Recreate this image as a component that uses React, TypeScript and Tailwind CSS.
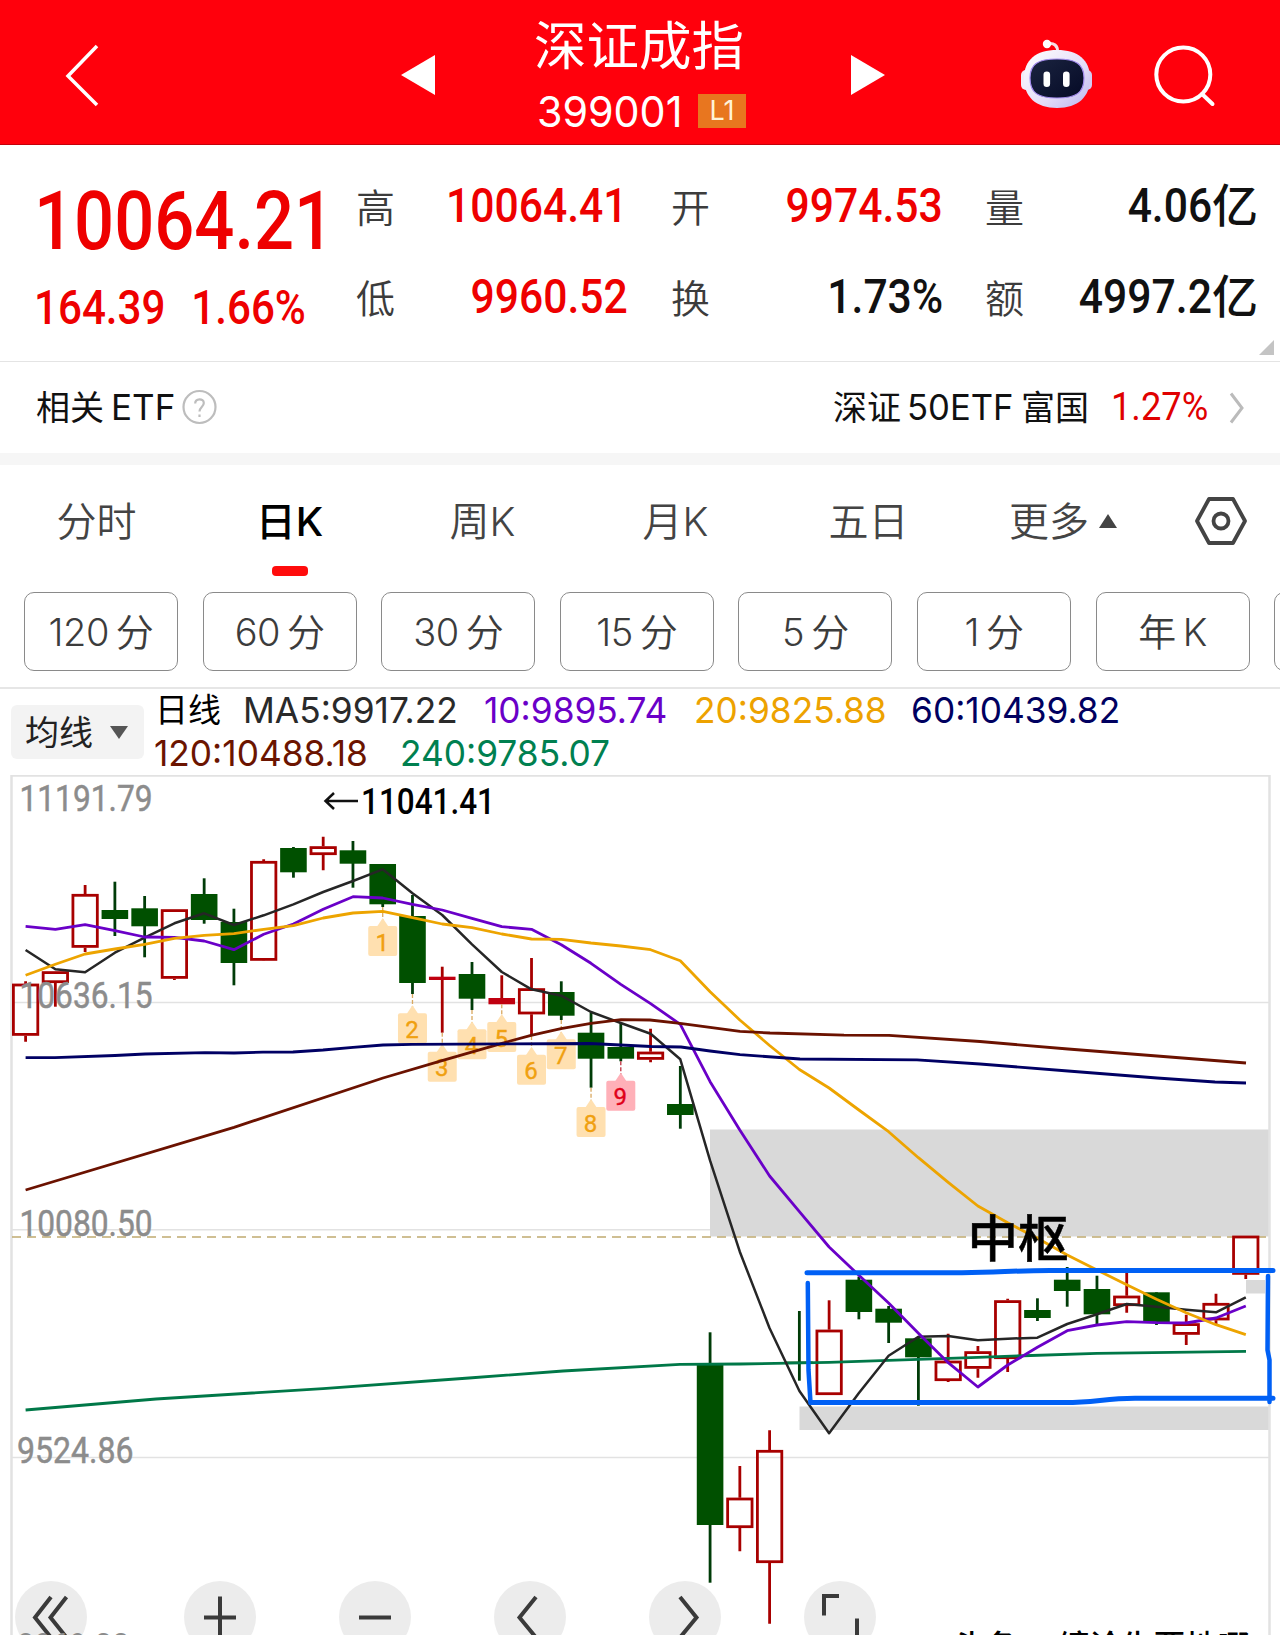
import React, { useState } from "react";
import clsx from "clsx";

type Candle = {
  up: boolean;
  top: number;
  bottom: number;
  high: number;
  low: number;
  solid?: boolean;
  thin?: boolean;
};

const FIRST_X = 25.6;
const STEP = 29.76;
const xAt = (i: number) => FIRST_X + i * STEP;

const c = (up: boolean, top: number, bottom: number, high: number, low: number): Candle => ({
  up,
  top,
  bottom,
  high,
  low,
});

const candles: Candle[] = [
  c(true, 983.7, 1035.7, 981.3, 1041.7),
  c(true, 971.3, 983, 971.3, 1006.7),
  c(true, 894, 947.7, 885, 952),
  c(false, 910, 919, 881.7, 936),
  c(false, 908.3, 926.3, 896, 957.3),
  c(true, 909.3, 978.7, 909.3, 980),
  c(false, 894, 920, 878.3, 923.7),
  c(false, 922, 963, 908.7, 985.3),
  c(true, 861, 960.7, 859.3, 961),
  c(false, 848, 872.3, 847, 877.7),
  c(true, 846.3, 855, 836.7, 870.3),
  c(false, 850.3, 863.7, 841, 887.7),
  c(false, 864, 904.3, 864, 907),
  c(false, 916, 983, 895, 994),
  { ...c(true, 976.7, 980, 966.7, 1032.7), solid: true },
  c(false, 974, 998.7, 962, 1010),
  { ...c(true, 998, 1004.3, 975.3, 1004), solid: true },
  c(true, 988.3, 1014.3, 958, 1036),
  c(false, 992, 1015.7, 981.3, 1020),
  c(false, 1032.7, 1058.7, 1012.3, 1087.7),
  c(false, 1047, 1058.7, 1023.3, 1061.3),
  c(true, 1051.7, 1059.7, 1028.7, 1062.3),
  c(false, 1104, 1115, 1066, 1128.7),
  c(false, 1364, 1525, 1332.3, 1582.7),
  c(true, 1497.7, 1528, 1466, 1551.3),
  c(true, 1450, 1563, 1430.3, 1623.7),
  { ...c(false, 1361.5, 1365, 1311, 1380.7), thin: true },
  c(true, 1329.7, 1395, 1300.3, 1395),
  c(false, 1279.7, 1312, 1276.7, 1319.3),
  c(false, 1308.7, 1322.7, 1306, 1343),
  c(false, 1338.3, 1357.3, 1337, 1405.7),
  c(true, 1360.7, 1381, 1333.7, 1382),
  c(true, 1351.3, 1368.7, 1346, 1377.7),
  c(true, 1300.3, 1359, 1298.7, 1372),
  c(false, 1310, 1318, 1298.3, 1321),
  c(false, 1279.7, 1291, 1267, 1306.7),
  c(false, 1289, 1314.3, 1275.7, 1325),
  c(true, 1295.7, 1306, 1272.7, 1312.7),
  c(false, 1292.3, 1322.3, 1292.3, 1325),
  c(true, 1323.3, 1334.7, 1314.7, 1345),
  c(true, 1303, 1320.3, 1293.7, 1324),
  c(true, 1235.7, 1274.7, 1235.7, 1279),
];

const series = (values: number[]) =>
  values.map((y, i) => `${xAt(i).toFixed(1)},${y}`).join(" ");

const ma5 = [
  950, 969.3, 972.3, 952.7, 937.7, 923.3, 913.3, 925, 915.3, 904.3, 892, 881, 869.3, 893.3, 915,
  944.3, 972, 989.3, 995.7, 1012, 1023, 1033.7, 1059.3, 1160.7, 1251.7, 1328.3, 1391, 1433.3, 1393,
  1355.7, 1336.7, 1336, 1340.3, 1338.7, 1337.7, 1324, 1314.3, 1304, 1306.7, 1309.7, 1312.3, 1297.3,
];

const ma10 = [
  926.3, 929.3, 924.7, 930.7, 937, 937.3, 941, 949.7, 934.3, 924, 909.3, 896.7, 898, 904.3, 910,
  918.3, 926.7, 929.3, 944.7, 963.3, 984.3, 1003.7, 1024.3, 1081.7, 1130, 1176, 1211.7, 1247,
  1275.3, 1303, 1333.3, 1362.7, 1387, 1365, 1347.3, 1330.7, 1325, 1321.7, 1322.7, 1323, 1318, 1306,
];

const ma20 = [
  975.3, 964.3, 954, 949, 944.3, 938.3, 935.3, 933.7, 929.3, 925.7, 918, 913, 911.3, 917.7, 924,
  927.7, 934, 939, 939.3, 943, 946, 949.7, 960.7, 991.7, 1020, 1045.5, 1069.5, 1088, 1110, 1131.7,
  1157.7, 1182.3, 1206, 1222.7, 1238.3, 1255, 1270, 1284.7, 1299.3, 1312.7, 1324.7, 1334.7,
];

const ma60 =
  "25.6,1057.7 55,1057.7 115,1055.5 145,1054 205,1052.7 234,1053 263,1052.2 293,1052 323,1050 353,1047.3 383,1045 412,1044.3 590,1043.5 651,1046.5 681,1047 710,1051 740,1054.7 800,1059 917,1059.8 980,1064 1068,1071 1157,1078 1215,1082 1246,1083";
const ma120 =
  "25.6,1190 234,1127.3 383,1078 442,1060.7 502,1043.3 531,1035.3 561,1028.7 591,1023.3 621,1019.7 650,1020 680,1023.3 740,1031.3 770,1033 844,1035.2 889,1035.4 980,1041.5 1068,1049 1157,1056 1246,1063";
const ma240 =
  "25.6,1410 156,1399 323,1388.6 469,1378 563,1371 680,1364.3 740,1364 829,1362.3 978,1357.3 1097,1353.3 1246,1351.3";

const marks = [
  { i: 12, from: 907, top: 926 },
  { i: 13, from: 994, top: 1013.3 },
  { i: 14, from: 1032.7, top: 1051.7 },
  { i: 15, from: 1010, top: 1029.3 },
  { i: 16, from: 1004.3, top: 1022 },
  { i: 17, from: 1036, top: 1054.7 },
  { i: 18, from: 1020, top: 1039.3 },
  { i: 19, from: 1087.7, top: 1107 },
  { i: 20, from: 1061.3, top: 1080.7 },
];

const axis = [
  { label: "11191.79", x: 19.5, y: 811, w: 133 },
  { label: "10636.15", x: 19.5, y: 1007.5, w: 133 },
  { label: "10080.50", x: 19.5, y: 1235.5, w: 133 },
  { label: "9524.86", x: 17, y: 1463, w: 116.5 },
  { label: "8969.22", x: 17, y: 1660, w: 116.5 },
];

const tabs = ["分时", "日K", "周K", "月K", "五日"];
const periods = [
  ["120", "分"],
  ["60", "分"],
  ["30", "分"],
  ["15", "分"],
  ["5", "分"],
  ["1", "分"],
  ["年", "K"],
];

const Robot: React.FC = () => (
  <svg width="76" height="72" viewBox="1018 38 76 72">
    <defs>
      <linearGradient id="shell" x1="0" y1="0" x2="1" y2="1">
        <stop offset="0" stopColor="#ffffff" />
        <stop offset="0.6" stopColor="#e4dcf8" />
        <stop offset="1" stopColor="#b9b4ee" />
      </linearGradient>
      <linearGradient id="face" x1="0" y1="0" x2="1" y2="1">
        <stop offset="0" stopColor="#1b2440" />
        <stop offset="1" stopColor="#050a26" />
      </linearGradient>
    </defs>
    <path d="M1047 44 C1054 42 1058 46 1057.5 52" fill="none" stroke="#f6dfe6" strokeWidth="3" />
    <circle cx="1047" cy="44" r="4.2" fill="#fff" />
    <rect x="1021" y="70" width="10" height="20" rx="5" fill="#f3ecf8" />
    <rect x="1082" y="70" width="10" height="20" rx="5" fill="#d4ccf2" />
    <path
      d="M1057 50 C1078 50 1090 60 1090 78 C1090 97 1078 108 1057 108 C1036 108 1024 97 1024 78 C1024 60 1036 50 1057 50Z"
      fill="url(#shell)"
    />
    <path
      d="M1057 59 C1076 59 1084 64 1084 78 C1084 93 1076 98 1057 98 C1038 98 1030 93 1030 78 C1030 64 1038 59 1057 59Z"
      fill="url(#face)"
      stroke="#a58cf0"
      strokeWidth="1.2"
    />
    <rect x="1043.5" y="71.5" width="6.6" height="15.5" rx="3.3" fill="#fff" />
    <rect x="1063" y="71.5" width="6.6" height="15.5" rx="3.3" fill="#fff" />
  </svg>
);

const Header: React.FC = () => (
  <header className="flex h-[145px] items-start border-b border-[#c4000a] bg-[#ff000c] text-white">
    <button className="mt-[44px] ml-[64px]" aria-label="back">
      <svg width="36" height="64" viewBox="0 0 36 64" fill="none" stroke="#fff" strokeWidth="3.500">
        <path d="M33 2 L4 32 L33 61" />
      </svg>
    </button>
    <button className="mt-[55px] ml-[301px]" aria-label="previous">
      <svg width="34" height="40" viewBox="0 0 34 40" fill="#fff">
        <path d="M34 0 V40 L0 20Z" />
      </svg>
    </button>
    <div className="ml-[99px] flex w-[213px] flex-col">
      <h1 className="mt-[16px] text-[52.500px] leading-[60px] whitespace-nowrap">深证成指</h1>
      <div className="mt-[9px] flex items-center">
        <span className="w-[164px] origin-left scale-x-[.96] pl-[3px] text-[43px] leading-[52px] whitespace-nowrap">
          399001
        </span>
        <span className="flex h-[34px] w-[48px] items-center justify-center bg-[#e8761f] text-[27px] text-[#fff3d8]">
          L1
        </span>
      </div>
    </div>
    <button className="mt-[55px] ml-[104px]" aria-label="next">
      <svg width="34" height="40" viewBox="0 0 34 40" fill="#fff">
        <path d="M0 0 V40 L34 20Z" />
      </svg>
    </button>
    <button className="mt-[38px] ml-[133px]" aria-label="assistant">
      <Robot />
    </button>
    <button className="mt-[42px] ml-[59px]" aria-label="search">
      <svg width="64" height="66" viewBox="1153 42 64 66" fill="none" stroke="#fff" strokeWidth="4">
        <circle cx="1183.3" cy="74.5" r="27" />
        <path d="M1202 94 L1212.500 104" strokeLinecap="round" />
      </svg>
    </button>
  </header>
);

interface StatProps {
  label: string;
  value: string;
  unit?: string;
  red?: boolean;
}

const Stat: React.FC<StatProps> = ({ label, value, unit, red }) => (
  <div className="flex h-[91px] items-center justify-between">
    <span className="pt-[5px] text-[39px] font-[350] text-[#3c3c3c]">{label}</span>
    <span
      className={clsx(
        "flex items-center font-[Roboto,'Noto_Sans_CJK_SC',sans-serif] text-[49px] leading-[60px] font-medium",
        red ? "text-[#ee0000]" : "text-[#111]"
      )}
    >
      <span className="origin-right scale-x-[.87]">{value}</span>
      {unit && <span className="w-[46px] text-[46px]">{unit}</span>}
    </span>
  </div>
);

const Quote: React.FC = () => (
  <section className="relative flex h-[217px] border-b border-[#e4e4e4] pt-[15px]">
    <div className="w-[356px] pl-[34px] font-[Roboto,sans-serif] font-medium text-[#ee0000]">
      <div className="mt-[15px] h-[92px] origin-left scale-x-[.86] text-[82px] leading-[92px] whitespace-nowrap">
        10064.21
      </div>
      <div className="mt-[11px] flex origin-left scale-x-[.86] gap-[30px] text-[49px] leading-[60px] whitespace-nowrap">
        <span>164.39</span>
        <span>1.66%</span>
      </div>
    </div>
    <div className="w-[272px]">
      <Stat label="高" value="10064.41" red />
      <Stat label="低" value="9960.52" red />
    </div>
    <div className="ml-[43px] w-[272px]">
      <Stat label="开" value="9974.53" red />
      <Stat label="换" value="1.73%" />
    </div>
    <div className="ml-[42px] w-[273px]">
      <Stat label="量" value="4.06" unit="亿" />
      <Stat label="额" value="4997.2" unit="亿" />
    </div>
    <svg className="absolute right-[6px] bottom-[6px]" width="15" height="15" fill="#c4c4c4">
      <path d="M15 0 V15 H0Z" />
    </svg>
  </section>
);

const EtfRow: React.FC = () => (
  <section className="flex h-[103px] items-center justify-between border-b-[12px] border-[#f6f6f6] pr-[35px] pl-[36px] text-[35px] text-[#111]">
    <div className="flex items-center">
      <span className="w-[75px] text-[34px]">相关</span>
      <span className="w-[71px] origin-left">ETF</span>
      <svg className="-mt-[2px]" width="35" height="36" viewBox="0 0 35 36" fill="none" stroke="#bdbdbd" strokeWidth="2.200">
        <circle cx="17.500" cy="18" r="16" />
        <path d="M13.200 14.500 C13.200 9 21.800 9 21.800 14 C21.800 18 17.500 18 17.500 22.500" />
        <path d="M17.500 25.500 V28" />
      </svg>
    </div>
    <div className="flex items-center">
      <span className="w-[74px] text-[34px]">深证</span>
      <span className="w-[114px] origin-left scale-x-[.99] whitespace-nowrap">50ETF</span>
      <span className="w-[89px] text-[34px]">富国</span>
      <span className="w-[119px] origin-left scale-x-[.93] pl-[1px] font-[Roboto,sans-serif] text-[39px] text-[#e00000]">
        1.27%
      </span>
      <svg width="16" height="32" viewBox="0 0 16 32" fill="none" stroke="#bbb" strokeWidth="3">
        <path d="M2 1.500 L13 16 L2 30.500" />
      </svg>
    </div>
  </section>
);

interface TabsProps {
  active: string;
  onChange: (tab: string) => void;
}

const Tabs: React.FC<TabsProps> = ({ active, onChange }) => (
  <nav className="flex h-[112px] items-start pt-[26px] text-[40px] leading-[62px] text-[#444]">
    {tabs.map((tab) => (
      <button
        key={tab}
        onClick={() => onChange(tab)}
        className={clsx(
          "flex w-[193px] flex-col items-center",
          tab === active ? "font-medium text-black" : "font-[350]"
        )}
      >
        <span>{tab}</span>
        {tab === active && <span className="mt-[13px] h-[10px] w-[36px] rounded-[4px] bg-[#ff0c0c]" />}
      </button>
    ))}
    <button className="ml-[44px] flex items-center font-[350]">
      更多
      <svg className="-mt-[3px] ml-[10px]" width="18" height="14" fill="#444">
        <path d="M9 0 L18 14 H0Z" />
      </svg>
    </button>
    <button className="mt-[5px] ml-[78px]" aria-label="settings">
      <svg width="52" height="50" viewBox="0 0 52 50" fill="none" stroke="#444" strokeWidth="3.800">
        <path d="M14 3 H38 L50 25 L38 47 H14 L2 25Z" strokeLinejoin="round" />
        <circle cx="26" cy="25" r="7.500" />
      </svg>
    </button>
  </nav>
);

const Periods: React.FC = () => (
  <div className="flex h-[112px] gap-[24.600px] overflow-hidden border-b-2 border-[#e6e6e6] pt-[15px] pl-[24px]">
    {periods.map(([a, b]) => (
      <button
        key={a}
        className="flex h-[79px] w-[154px] shrink-0 items-center justify-center gap-[7px] rounded-[10px] border border-[#8a8a8a] pt-[2px] text-[38px] font-[350] tracking-[-0.5px] text-[#3c3c3c]"
      >
        <span>{a}</span>
        <span>{b}</span>
      </button>
    ))}
    <button className="h-[79px] w-[154px] shrink-0 rounded-[10px] border border-[#8a8a8a]" aria-label="more" />
  </div>
);

const Legend: React.FC = () => (
  <div className="flex h-[86px] pl-[11px]">
    <button className="mt-[16px] flex h-[54px] w-[133px] items-center rounded-[6px] bg-[#f3f3f3] pl-[14px] text-[34px] text-[#222]">
      均线
      <svg className="ml-[17px]" width="18" height="13" fill="#555">
        <path d="M0 0 H18 L9 13Z" />
      </svg>
    </button>
    <div className="ml-[10px] text-[36px] leading-[43px] whitespace-nowrap">
      <div className="flex">
        <span className="w-[89px] pl-[1px] text-[33px] text-black">日线</span>
        <span className="w-[241px] origin-left scale-x-[.98] text-[#2a2a2a]">MA5:9917.22</span>
        <span className="w-[210px] origin-left scale-x-[.98] text-[#6a00c8]">10:9895.74</span>
        <span className="w-[217px] origin-left scale-x-[.98] text-[#eda200]">20:9825.88</span>
        <span className="origin-left scale-x-[.98] text-[#000060]">60:10439.82</span>
      </div>
      <div className="flex">
        <span className="w-[246px] origin-left scale-x-[.98] text-[#6b1400]">120:10488.18</span>
        <span className="origin-left scale-x-[.98] text-[#008050]">240:9785.07</span>
      </div>
    </div>
  </div>
);

const CandleShape: React.FC<{ candle: Candle; x: number }> = ({ candle, x }) => {
  const { up, top, bottom, high, low, solid, thin } = candle;
  const color = up ? "#a80000" : "#005000";
  if (up && !solid) {
    return (
      <g stroke={color} strokeWidth="2.800" fill="none">
        <path d={`M${x} ${high} V${top} M${x} ${bottom} V${low}`} />
        <rect x={x - 12.2} y={top + 1.3} width="24.400" height={bottom - top - 2.6} />
      </g>
    );
  }
  return (
    <g>
      <path d={`M${x} ${high} V${low}`} stroke={up ? color : "#003c08"} strokeWidth="2.800" />
      <rect
        x={x - 13.3}
        y={top}
        width="26.600"
        height={thin ? 2.5 : bottom - top}
        fill={up ? "#c00010" : color}
      />
    </g>
  );
};

const Chart: React.FC = () => (
  <svg
    className="block"
    width="1280"
    height="860"
    viewBox="0 775 1280 860"
    fontFamily="Roboto, 'Noto Sans CJK SC', sans-serif"
  >
    <rect x="710" y="1129.500" width="559" height="107" fill="#d9d9d9" />
    <rect x="799.500" y="1406.500" width="469.500" height="23.500" fill="#d9d9d9" />
    <rect x="1246" y="1280" width="19" height="13.500" fill="#d9d9d9" />
    <g stroke="#e2e2e2" strokeWidth="1.500">
      <path d="M12 1002.500 H1269 M12 1229.700 H710 M12 1457.500 H1269" />
      <path d="M11.500 1640 V775.500 H1269.500 V1640" fill="none" strokeWidth="2.500" />
    </g>
    <path d="M12 1237 H1269" stroke="#c0ab70" strokeWidth="1.600" strokeDasharray="9 6" />

    {candles.map((candle, i) => (
      <CandleShape key={i} candle={candle} x={xAt(i)} />
    ))}

    {marks.map(({ i, from, top }, n) => {
      const x = xAt(i);
      const last = n === marks.length - 1;
      const fill = last ? "#ffb0b8" : "#ffe0b0";
      return (
        <g key={i}>
          <path
            d={`M${x} ${from} V${top - 6}`}
            stroke={last ? "#c03040" : "#d9a860"}
            strokeWidth="1.300"
            strokeDasharray="4 2"
          />
          <path d={`M${x} ${top - 8} L${x + 6} ${top + 1} H${x - 6}Z`} fill={fill} />
          <rect x={x - 14.5} y={top} width="29" height="30" rx="2" fill={fill} />
          <text
            x={x - 0.5}
            y={top + 24.5}
            textAnchor="middle"
            fontSize="24"
            fill={last ? "#e00018" : "#f0a010"}
            stroke={last ? "#e00018" : "#f0a010"}
            strokeWidth="0.400"
          >
            {n + 1}
          </text>
        </g>
      );
    })}

    <g fill="none" strokeWidth="2.800" strokeLinejoin="round">
      <polyline points={ma240} stroke="#007848" />
      <polyline points={series(ma5)} stroke="#262626" strokeWidth="2.500" />
      <polyline points={series(ma10)} stroke="#6a00c8" />
      <polyline points={series(ma20)} stroke="#eda400" />
      <polyline points={ma120} stroke="#6b1200" />
      <polyline points={ma60} stroke="#000064" />
    </g>

    <g fill="none" stroke="#0060f5" strokeWidth="5" strokeLinecap="round" strokeLinejoin="round">
      <path d="M807 1272.700 H962 C1000 1272.700 1010 1270.500 1050 1270.500 H1273" />
      <path d="M807.800 1283 L808.500 1370 L810.500 1403" strokeWidth="4.500" />
      <path d="M812 1402.500 H1065 C1095 1402.500 1105 1398.300 1135 1398.300 H1273" />
      <path d="M1268 1276 L1267.500 1350 L1269.500 1360 V1402" strokeWidth="4.500" />
    </g>

    <text x="967.500" y="1257" fontSize="50.500" fontWeight="500" fill="#000" stroke="#000" strokeWidth="0.500">
      中枢
    </text>

    <path d="M358 801 H326 M334 793 L325.500 801 L334 809" fill="none" stroke="#111" strokeWidth="2.500" />
    <text
      x="361"
      y="814"
      fontSize="36.500"
      fontWeight="500"
      textLength="134"
      lengthAdjust="spacingAndGlyphs"
      fill="#000"
    >
      11041.41
    </text>

    {axis.slice(0, 4).map(({ label, x, y, w }) => (
      <text
        key={label}
        x={x}
        y={y}
        fontSize="36.500"
        textLength={w}
        lengthAdjust="spacingAndGlyphs"
        fill="#8c8c8c"
        stroke="#8c8c8c"
        strokeWidth="0.500"
      >
        {label}
      </text>
    ))}
  </svg>
);

const tools = [
  { name: "rewind", d: "M50 13.500 L34 34 L50 54 M65.500 13.500 L49.500 34 L65.500 54", shift: -14 },
  { name: "zoom in", d: "M36 13 V55 M20 34 H52", shift: 0 },
  { name: "zoom out", d: "M20 34 H52", shift: 0 },
  { name: "left", d: "M42 13.500 L25.500 34 L42 54", shift: 0 },
  { name: "right", d: "M31 13.500 L47.500 34 L31 54", shift: 0 },
  { name: "fullscreen", d: "M20 32 V12.500 H35 M53 35 V54 H38", shift: 0 },
];

const Toolbar: React.FC = () => (
  <div className="absolute inset-x-0 bottom-0 flex h-[54px] items-start overflow-hidden pl-[14.500px]">
    {tools.map(({ name, d, shift }, i) => (
      <button
        key={name}
        aria-label={name}
        className={clsx("h-[72px] w-[72px] shrink-0 rounded-full bg-[#ececec]", i === 0 ? "mr-[97px]" : "mr-[83px]")}
      >
        <svg width="72" height="72" viewBox="0 0 72 72" fill="none" stroke="#3a3a3a" strokeWidth="4">
          <path d={d} transform={`translate(${shift} 2.500)`} />
        </svg>
      </button>
    ))}
    <span className="mt-[46px] ml-[-5px] text-[32px] leading-[40px] font-medium whitespace-nowrap text-black">
      头条 @缠论生要地哪
    </span>
    <span className="absolute top-[46px] left-[17px] origin-left scale-x-[.86] font-[Roboto,sans-serif] text-[36px] leading-[40px] text-[#8c8c8c]">
      {axis[4].label}
    </span>
  </div>
);

export default function App() {
  const [active, setActive] = useState("日K");

  return (
    <div className="relative h-[1635px] w-[1280px] overflow-hidden bg-white font-[Inter,'Noto_Sans_CJK_SC',sans-serif]">
      <Header />
      <Quote />
      <EtfRow />
      <Tabs active={active} onChange={setActive} />
      <Periods />
      <Legend />
      <Chart />
      <Toolbar />
    </div>
  );
}
